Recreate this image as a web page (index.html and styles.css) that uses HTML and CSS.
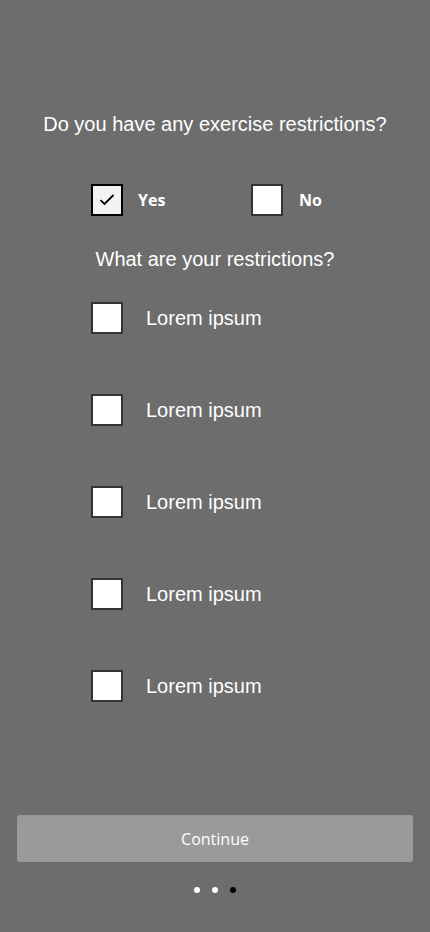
FILE: index.html
```html
<!DOCTYPE html>
<html>
<head>
<meta charset="utf-8">
<link rel="stylesheet" href="styles.css">
</head>
<body>
<div class="screen">
  <main class="content">
    <h1 class="title">Do you have any exercise restrictions?</h1>
    <div class="choices">
      <label class="choice">
        <span class="box checked">
          <svg width="16" height="12" viewBox="0 0 16 12"><path d="M1.5 6.2 L5.5 10 L14.5 1" fill="none" stroke="#000" stroke-width="1.8"/></svg>
        </span>
        <span class="choice-label">Yes</span>
      </label>
      <label class="choice">
        <span class="box"></span>
        <span class="choice-label">No</span>
      </label>
    </div>
    <h2 class="subtitle">What are your restrictions?</h2>
    <ul class="list">
      <li class="item"><span class="box"></span><span class="item-label">Lorem ipsum</span></li>
      <li class="item"><span class="box"></span><span class="item-label">Lorem ipsum</span></li>
      <li class="item"><span class="box"></span><span class="item-label">Lorem ipsum</span></li>
      <li class="item"><span class="box"></span><span class="item-label">Lorem ipsum</span></li>
      <li class="item"><span class="box"></span><span class="item-label">Lorem ipsum</span></li>
    </ul>
  </main>
  <footer class="footer">
    <button class="continue">Continue</button>
    <div class="dots">
      <span class="dot"></span>
      <span class="dot"></span>
      <span class="dot active"></span>
    </div>
  </footer>
</div>
</body>
</html>
```
FILE: styles.css
```css
* { box-sizing: border-box; }
html, body {
  margin: 0;
  padding: 0;
  background: #6d6d6d;
}
.screen {
  width: 430px;
  height: 932px;
  display: flex;
  flex-direction: column;
  font-family: "Liberation Sans", Arial, sans-serif;
  color: #fff;
}
.content {
  flex: 1;
  padding-top: 111px;
}
.title {
  margin: 0;
  font-size: 20px;
  font-weight: normal;
  text-align: center;
  line-height: 26px;
}
.choices {
  display: flex;
  padding-left: 91px;
  margin-top: 47px;
}
.choice {
  display: flex;
  align-items: center;
  width: 160px;
}
.choice-label {
  font-family: "Open Sans", "Noto Sans", sans-serif;
  font-weight: 700;
  font-size: 16px;
  margin-left: 15px;
  color: #fff;
}
.choice:nth-child(2) .choice-label { margin-left: 16px; }
.box {
  width: 32px;
  height: 32px;
  border: 2px solid #333;
  background: #fff;
  display: flex;
  align-items: center;
  justify-content: center;
  flex: none;
}
.box.checked {
  border-color: #000;
  background: #f2f2f2;
}
.subtitle {
  margin: 30px 0 0;
  font-size: 20px;
  font-weight: normal;
  text-align: center;
  line-height: 26px;
}
.list {
  list-style: none;
  margin: 30px 0 0;
  padding: 0 0 0 91px;
  display: flex;
  flex-direction: column;
  gap: 60px;
}
.item {
  display: flex;
  align-items: center;
  height: 32px;
}
.item-label {
  margin-left: 23px;
  font-size: 20px;
}
.footer {
  padding: 0 17px 39px;
  display: flex;
  flex-direction: column;
  align-items: center;
}
.continue {
  width: 396px;
  height: 47px;
  border: none;
  border-radius: 3px;
  background: #9a9a9a;
  color: #fff;
  font-family: "Open Sans", "Noto Sans", sans-serif;
  font-size: 16px;
  padding: 0;
}
.dots {
  display: flex;
  gap: 12px;
  margin-top: 25px;
}
.dot {
  width: 6px;
  height: 6px;
  border-radius: 50%;
  background: #fff;
}
.dot.active { background: #000; }
```
